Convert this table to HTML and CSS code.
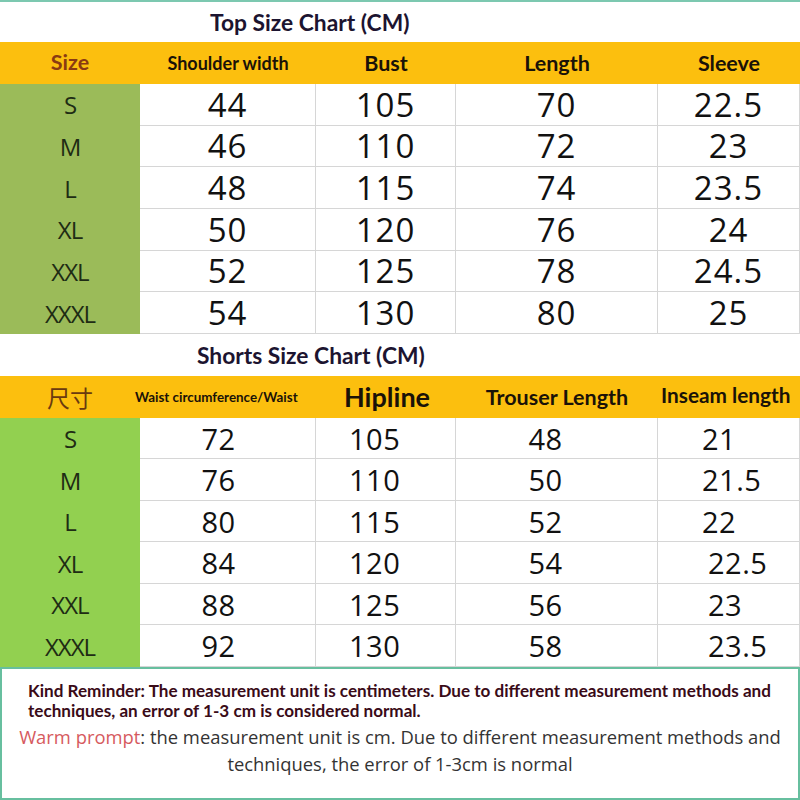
FILE: index.html
```html
<!DOCTYPE html>
<html>
<head>
<meta charset="utf-8">
<link rel="stylesheet" href="styles.css">
</head>
<body>
<div class="page">
  <div class="title">Top Size Chart (CM)</div>
  <div class="grid top">
    <div class="h size">Size</div>
    <div class="h small">Shoulder width</div>
    <div class="h">Bust</div>
    <div class="h">Length</div>
    <div class="h">Sleeve</div>

    <div class="sz">S</div><div class="n">44</div><div class="n">105</div><div class="n">70</div><div class="n">22.5</div>
    <div class="sz">M</div><div class="n">46</div><div class="n">110</div><div class="n">72</div><div class="n">23</div>
    <div class="sz">L</div><div class="n">48</div><div class="n">115</div><div class="n">74</div><div class="n">23.5</div>
    <div class="sz">XL</div><div class="n">50</div><div class="n">120</div><div class="n">76</div><div class="n">24</div>
    <div class="sz">XXL</div><div class="n">52</div><div class="n">125</div><div class="n">78</div><div class="n">24.5</div>
    <div class="sz">XXXL</div><div class="n">54</div><div class="n">130</div><div class="n">80</div><div class="n">25</div>
  </div>

  <div class="title shorts-title">Shorts Size Chart (CM)</div>
  <div class="grid shorts">
    <div class="h size cjk">尺寸</div>
    <div class="h tiny">Waist circumference/Waist</div>
    <div class="h big">Hipline</div>
    <div class="h">Trouser Length</div>
    <div class="h inseam">Inseam length</div>

    <div class="sz">S</div><div class="n c2">72</div><div class="n c3">105</div><div class="n c4">48</div><div class="n c5">21</div>
    <div class="sz">M</div><div class="n c2">76</div><div class="n c3">110</div><div class="n c4">50</div><div class="n c5">21.5</div>
    <div class="sz">L</div><div class="n c2">80</div><div class="n c3">115</div><div class="n c4">52</div><div class="n c5">22</div>
    <div class="sz">XL</div><div class="n c2">84</div><div class="n c3">120</div><div class="n c4">54</div><div class="n c5 s">22.5</div>
    <div class="sz">XXL</div><div class="n c2">88</div><div class="n c3">125</div><div class="n c4">56</div><div class="n c5 s">23</div>
    <div class="sz">XXXL</div><div class="n c2">92</div><div class="n c3">130</div><div class="n c4">58</div><div class="n c5 s">23.5</div>
  </div>

  <div class="note">
    <p class="kind">Kind Reminder: The measurement unit is centimeters. Due to different measurement methods and<br>techniques, an error of 1-3 cm is considered normal.</p>
    <p class="warm"><span class="red">Warm prompt</span>: the measurement unit is cm. Due to different measurement methods and<br>techniques, the error of 1-3cm is normal</p>
  </div>
</div>
</body>
</html>
```

FILE: styles.css
```css
html, body {
  margin: 0;
  padding: 0;
  background: #ffffff;
}

.page {
  width: 800px;
  height: 800px;
  overflow: hidden;
  border-top: 2px solid #7cc8b0;
  box-sizing: border-box;
  font-family: "Open Sans", "Noto Sans", sans-serif;
  color: #111;
}

.title {
  height: 40px;
  display: flex;
  align-items: center;
  padding-left: 210px;
  font-family: Lato, "Open Sans", sans-serif;
  font-weight: 700;
  font-size: 22.8px;
  color: #1c1430;
}

.shorts-title {
  height: 42px;
  padding-left: 197px;
}

.grid {
  display: grid;
  grid-template-columns: 140px 176px 140px 202px 142px;
}

.top {
  grid-template-rows: 42px repeat(6, 41.67px);
}

.shorts {
  grid-template-rows: 42px repeat(6, 41.5px);
}

.h {
  background: #fcbf0e;
  display: flex;
  align-items: center;
  justify-content: center;
  font-family: Lato, "Open Sans", sans-serif;
  font-weight: 700;
  font-size: 21.5px;
  color: #1a1208;
}

.h.size {
  color: #8a3a12;
  padding-bottom: 3px;
  box-sizing: border-box;
}

.h.small {
  font-size: 18px;
}

.h.tiny {
  font-size: 13.4px;
  justify-content: flex-start;
  margin-left: -5px;
}

.h.big {
  font-size: 27px;
  justify-content: flex-start;
  padding-left: 28px;
}

.h.inseam {
  font-size: 20.8px;
  justify-content: flex-start;
  padding-left: 3px;
  padding-bottom: 4px;
  box-sizing: border-box;
}

.h.cjk {
  font-family: "Noto Sans CJK SC", sans-serif;
  font-weight: 400;
  font-size: 23px;
  color: #6a3a10;
  justify-content: flex-start;
  padding-left: 47px;
  padding-bottom: 0;
}

.sz {
  display: flex;
  align-items: center;
  justify-content: center;
  font-family: "Open Sans", "Noto Sans", sans-serif;
  font-size: 24px;
  letter-spacing: -1px;
  color: #1e2c14;
}

.top .sz {
  background: #9bbb59;
}

.shorts .sz {
  background: #92d050;
}

.n {
  display: flex;
  align-items: center;
  justify-content: center;
  font-size: 33px;
  letter-spacing: 1px;
  color: #111;
  border-right: 1px solid #d6d6d6;
  border-bottom: 1px solid #d6d6d6;
  box-sizing: border-box;
  line-height: 1;
}

.shorts .n {
  font-size: 29px;
  letter-spacing: 0.5px;
}

.shorts .c2 {
  padding-right: 18px;
}

.shorts .c3 {
  justify-content: flex-start;
  padding-left: 33px;
}

.shorts .c4 {
  padding-right: 22px;
}

.shorts .c5 {
  justify-content: flex-start;
  padding-left: 44px;
}

.shorts .c5.s {
  padding-left: 50px;
}

.note {
  height: 133px;
  border: 2px solid #67bf9f;
  box-sizing: border-box;
  padding: 12px 0 0 26px;
}

.kind {
  margin: 0;
  font-family: Lato, "Open Sans", sans-serif;
  font-weight: 700;
  font-size: 17.1px;
  line-height: 20px;
  color: #3a0b18;
  white-space: nowrap;
}

.warm {
  margin: 2px 0 0 -26px;
  text-align: center;
  font-family: "Open Sans", "Noto Sans", sans-serif;
  font-size: 18.4px;
  line-height: 27px;
  color: #333;
  white-space: nowrap;
}

.red {
  color: #d65a5e;
}
```
